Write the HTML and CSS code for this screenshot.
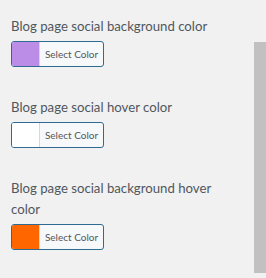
FILE: index.html
```html
<!DOCTYPE html>
<html lang="en">
  <head>
    <meta charset="UTF-8" />
    <meta name="viewport" content="width=device-width, initial-scale=1.0" />
    <title>Social Colors</title>
    <link rel="stylesheet" href="styles.css">
  </head>
  <body>
    <div class="panel">
      <div class="fields">
        <div class="field">
          <label class="field-label">Blog page social background color</label>
          <button class="color-result">
            <span class="swatch swatch-purple"></span>
            <span class="color-text">Select Color</span>
          </button>
        </div>
        <div class="field">
          <label class="field-label">Blog page social hover color</label>
          <button class="color-result">
            <span class="swatch swatch-white"></span>
            <span class="color-text">Select Color</span>
          </button>
        </div>
        <div class="field">
          <label class="field-label">Blog page social background hover color</label>
          <button class="color-result">
            <span class="swatch swatch-orange"></span>
            <span class="color-text">Select Color</span>
          </button>
        </div>
      </div>
      <div class="scrollbar"></div>
    </div>
  </body>
</html>
```

FILE: styles.css
```css
body {
  margin: 0;
  background-color: #f1f1f1;
  font-family: Lato, "Noto Sans", sans-serif;
}

.panel {
  display: flex;
  height: 278px;
}

.fields {
  width: 232px;
  padding: 16px 0 0 11px;
  display: flex;
  flex-direction: column;
  gap: 30px;
}

.field {
  display: flex;
  flex-direction: column;
  align-items: flex-start;
  gap: 4px;
}

.field-label {
  font-size: 13.2px;
  line-height: 21px;
  color: #50575e;
}

.color-result {
  display: flex;
  align-items: stretch;
  width: 93px;
  height: 26px;
  padding: 0;
  border: 1px solid #2e6a92;
  border-radius: 3px;
  background-color: #f6f8f9;
  overflow: hidden;
  cursor: pointer;
}

.swatch {
  width: 27px;
  border-right: 1px solid #d3d8dc;
}

.swatch-purple {
  background-color: #bb8de6;
}

.swatch-white {
  background-color: #ffffff;
}

.swatch-orange {
  background-color: #ff6600;
}

.color-text {
  flex: 1;
  font-family: Lato, "Noto Sans", sans-serif;
  font-size: 10px;
  line-height: 24px;
  color: #50575e;
  text-align: center;
}

.scrollbar {
  margin: 42px 0 0 11px;
  width: 12px;
  height: 231px;
  background-color: #c1c1c1;
}
```
